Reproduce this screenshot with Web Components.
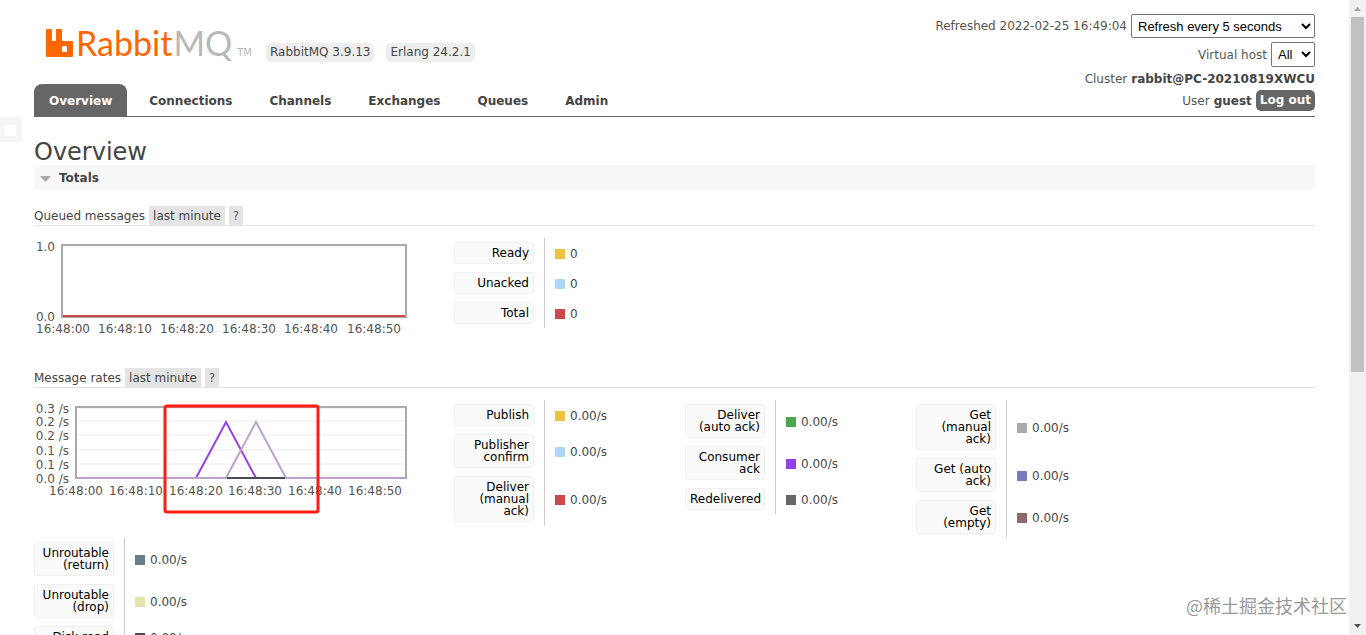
<!DOCTYPE html>
<html lang="en">
<head>
<meta charset="utf-8">
<title>RabbitMQ Management</title>
<style>
html, body { margin: 0; height: 100%; }
body { font: 12px/16px Verdana, "DejaVu Sans", sans-serif; color: #484848; background: #fff; }
</style>
</head>
<body>
<mq-app></mq-app>
<script>
function define(name, html, setup) {
  const template = document.createElement('template');
  template.innerHTML = html;
  customElements.define(name, class extends HTMLElement {
    constructor() {
      super();
      this.attachShadow({ mode: 'open' }).appendChild(template.content.cloneNode(true));
    }
    connectedCallback() {
      if (setup && !this.ready) { this.ready = true; setup(this, this.shadowRoot); }
    }
  });
}

define('mq-logo', `
<style>
:host { display: block; width: 206px; }
a { display: flex; align-items: flex-end; text-decoration: none; color: #f60; }
svg { display: block; flex: none; margin: 0 3px 6px 0; }
.name { font: 34px/36px Lato, sans-serif; padding-bottom: 2px; }
.name b { font-weight: 400; color: #b8b8b8; margin-left: 1px; }
small { font: 10px/12px "DejaVu Sans", sans-serif; color: #b8b8b8; margin: 0 0 4px auto; }
</style>
<a href="#/" aria-label="RabbitMQ home">
<svg width="27" height="28" viewBox="0 0 27 28"><path fill="#f60" fill-rule="evenodd" d="M1 0h4a1 1 0 0 1 1 1v10a1 1 0 0 0 1 1h2a1 1 0 0 0 1-1V1a1 1 0 0 1 1-1h4a1 1 0 0 1 1 1v10a1 1 0 0 0 1 1h9a1 1 0 0 1 1 1v14a1 1 0 0 1-1 1H1a1 1 0 0 1-1-1V1a1 1 0 0 1 1-1zM17 17a1 1 0 0 0-1 1v4a1 1 0 0 0 1 1h3a1 1 0 0 0 1-1v-4a1 1 0 0 0-1-1z"/></svg>
<span class="name">Rabbit<b>MQ</b></span><small>TM</small></a>`);

define('mq-badge', `
<style>:host { display: block; background: #eee; border-radius: 5px; padding: 2px 4px; line-height: 15px; white-space: nowrap; }</style>
<slot></slot>`);

define('mq-tab', `
<style>
:host { display: block; }
a { display: block; padding: 9px 15px 7px; color: #444; font-weight: bold; text-decoration: none; border-radius: 8px 8px 0 0; }
:host([selected]) a { background: #666; color: #fff; }
</style>
<a href="#"><slot></slot></a>`);

define('mq-status', `
<style>
:host { display: grid; justify-items: end; align-content: start; row-gap: 1px; color: #555; }
div { display: flex; align-items: center; gap: 4px; min-height: 21px; white-space: nowrap; }
.pick { margin-bottom: 3px; }
b { color: #444; }
select { font: 13px "Liberation Sans", Arial, sans-serif; height: 24px; border: 1px solid #767676; border-radius: 2px; background: #fff; color: #000; padding: 0 2px; margin: 0; }
.pick select { width: 184px; }
.host select { width: 44px; height: 25px; }
button { font: bold 12px/15px Verdana, "DejaVu Sans", sans-serif; color: #fff; background: #666; border: 0; border-radius: 5px; padding: 3px 4px; height: 21px; }
</style>
<div class="pick"><label for="every">Refreshed 2022-02-25 16:49:04</label><select id="every"><option>Refresh every 5 seconds</option><option>Refresh every 10 seconds</option></select></div>
<div class="host"><label for="vhost">Virtual host</label><select id="vhost"><option>All</option><option>/</option></select></div>
<div><span>Cluster</span><b>rabbit@PC-20210819XWCU</b></div>
<div><span>User</span><b>guest</b><button type="button">Log out</button></div>`);

define('mq-header', `
<style>
:host { display: grid; grid-template-columns: 1fr auto; border-bottom: 1px solid #666; }
.brand { display: flex; align-items: flex-end; height: 46px; padding: 16px 0 22px 12px; gap: 12px; }
mq-logo { margin: 0 2px -1px 0; }
nav { display: flex; gap: 7px; grid-row: 2; grid-column: 1; }
mq-status { grid-row: 1 / 3; grid-column: 2; padding-top: 14px; }
</style>
<div class="brand"><mq-logo></mq-logo><mq-badge>RabbitMQ 3.9.13</mq-badge><mq-badge>Erlang 24.2.1</mq-badge></div>
<mq-status></mq-status>
<nav><mq-tab selected>Overview</mq-tab><mq-tab>Connections</mq-tab><mq-tab>Channels</mq-tab><mq-tab>Exchanges</mq-tab><mq-tab>Queues</mq-tab><mq-tab>Admin</mq-tab></nav>`);

define('mq-section', `
<style>
:host { display: block; }
h2 { display: flex; align-items: center; gap: 8px; margin: 0; padding: 5px 6px 3px; font: bold 12px/17px Verdana, "DejaVu Sans", sans-serif; color: #444; background: #f8f8f8; }
</style>
<h2><svg width="11" height="6" viewBox="0 0 11 6"><path fill="#aaa" d="M0 0h11L5.500 6z"/></svg><slot name="title"></slot></h2>
<slot></slot>`);

define('mq-panel', `
<style>
:host { display: block; }
h3 { display: flex; gap: 4px; margin: 0; font: 12px/17px Verdana, "DejaVu Sans", sans-serif; color: #444; border-bottom: 1px solid #e4e4e4; }
::slotted([slot=title]) { padding-top: 2px; }
a { background: #e4e4e4; color: #444; padding: 2px 4px 0; text-decoration: none; }
a.help { color: #665a50; }
.body { display: flex; flex-wrap: wrap; align-items: flex-start; padding-top: 12px; min-height: 124px; }
</style>
<h3><slot name="title"></slot><a href="#">last minute</a><a class="help" href="#">?</a></h3>
<div class="body"><slot></slot></div>`);

define('mq-chart', `
<style>
:host { display: block; width: 420px; }
svg { display: block; overflow: visible; }
text { font: 12px Verdana, "DejaVu Sans", sans-serif; fill: #545454; }
</style>
<svg width="380" height="114"></svg>`, (el, root) => {
  const d = JSON.parse(el.getAttribute('data'));
  const [x, y, w, h] = d.box;
  let s = d.ticks.map(t => `<path d="M${x} ${t[1]}h${w}" stroke="#ececec"/>`).join('');
  s += `<rect x="${x}" y="${y}" width="${w}" height="${h}" fill="none" stroke="#aaa" stroke-width="2"/>`;
  s += d.lines.map(l => `<polyline points="${l[1]}" fill="none" stroke="${l[0]}" stroke-width="2"/>`).join('');
  s += d.ticks.map(t => `<text x="${x - 7}" y="${t[1] + 5}" text-anchor="end">${t[0]}</text>`).join('');
  s += d.times.map((t, i) => `<text x="${t}" y="95" text-anchor="middle">16:48:${i}0</text>`).join('');
  if (d.mark) s += `<rect x="${d.mark[0]}" y="${d.mark[1]}" width="${d.mark[2]}" height="${d.mark[3]}" rx="2" fill="none" stroke="#ff1d12" stroke-width="3"/>`;
  root.querySelector('svg').innerHTML = s;
});

define('mq-legend', `
<style>
:host { display: block; width: 231px; }
table { border-collapse: collapse; }
th { padding: 4px 10px 4px 0; font-weight: normal; text-align: right; }
th span { display: block; box-sizing: border-box; width: 80px; padding: 4px; border: 1px solid #f0f0f0; border-radius: 3px; background: #fafafa; color: #000; line-height: 12px; }
td { border-left: 1px solid #ccc; padding: 2px 0 0 10px; vertical-align: middle; }
td div { display: flex; align-items: center; gap: 5px; }
i { width: 10px; height: 10px; background: var(--c); }
</style>
<table><tbody></tbody></table>`, (el, root) => {
  root.querySelector('tbody').innerHTML = JSON.parse(el.getAttribute('rows')).map(([label, color, value]) =>
    `<tr><th scope="row"><span>${label}</span></th><td><div><i style="--c:${color}"></i>${value}</div></td></tr>`).join('');
});

define('mq-scrollbar', `
<style>
:host { display: flex; flex-direction: column; align-items: center; width: 17px; flex: none; background: #f1f1f1; }
svg { display: block; flex: none; }
.track { flex: 1; width: 13px; }
.thumb { height: 59%; background: #c1c1c1; }
</style>
<svg width="17" height="17"><path fill="#a3a3a3" d="M5 11h7L8.500 7z"/></svg>
<div class="track"><div class="thumb"></div></div>
<svg width="17" height="17"><path fill="#505050" d="M5 6h7l-3.500 4z"/></svg>`);

define('mq-app', `
<style>
:host { display: flex; height: 100vh; overflow: hidden; position: relative; }
main { flex: 1; min-width: 0; overflow: hidden; padding: 0 34px; }
h1 { font: 24px/26px Verdana, "DejaVu Sans", sans-serif; margin: 22px 0 0; color: #444; }
.queued { margin-top: 16px; }
.rates { margin-top: 6px; }
.handle { position: absolute; left: 0; top: 117px; box-sizing: border-box; width: 22px; height: 25px; border: solid #f5f5f5; border-width: 8px 6px 6px 5px; border-radius: 0 3px 3px 0; background: #fff; }
.watermark { position: absolute; right: 19px; bottom: 17px; font: 18px/26px "Noto Sans CJK SC", sans-serif; color: #999; text-shadow: 0 0 2px #fff; }
</style>
<main>
<mq-header></mq-header>
<h1>Overview</h1>
<mq-section><span slot="title">Totals</span>
<mq-panel class="queued"><span slot="title">Queued messages</span>
<mq-chart data='{"box":[28,7,344,72],"ticks":[["1.0",8],["0.0",78]],"times":[29,91,153,215,277,340],"lines":[["#cb4b4b","29,78 371,78"]]}'></mq-chart>
<mq-legend rows='[["Ready","#edc240","0"],["Unacked","#afd8f8","0"],["Total","#cb4b4b","0"]]'></mq-legend>
</mq-panel>
<mq-panel class="rates"><span slot="title">Message rates</span>
<mq-chart data='{"box":[42,7,330,71],"ticks":[["0.3 /s",8],["0.2 /s",21],["0.2 /s",35],["0.1 /s",50],["0.1 /s",64],["0.0 /s",78]],"times":[42,102,162,221,281,341],"lines":[["#9440ed","162,78 192,22 222,78"],["#bda0c6","42,78 192,78 222,22 252,78 371,78"],["#4b4a55","193,78 251,78"]],"mark":[131,6,153,106]}'></mq-chart>
<mq-legend rows='[["Publish","#edc240","0.00/s"],["Publisher confirm","#afd8f8","0.00/s"],["Deliver (manual ack)","#cb4b4b","0.00/s"]]'></mq-legend>
<mq-legend rows='[["Deliver (auto ack)","#4da74d","0.00/s"],["Consumer ack","#9440ed","0.00/s"],["Redelivered","#666","0.00/s"]]'></mq-legend>
<mq-legend rows='[["Get (manual ack)","#aaa","0.00/s"],["Get (auto ack)","#7c79c3","0.00/s"],["Get (empty)","#8e6767","0.00/s"]]'></mq-legend>
<mq-legend rows='[["Unroutable (return)","#67808d","0.00/s"],["Unroutable (drop)","#e5e4ae","0.00/s"],["Disk read","#4b4a55","0.00/s"]]'></mq-legend>
</mq-panel>
</mq-section>
</main>
<mq-scrollbar></mq-scrollbar>
<div class="handle"></div>
<div class="watermark">@稀土掘金技术社区</div>`);
</script>
</body>
</html>
